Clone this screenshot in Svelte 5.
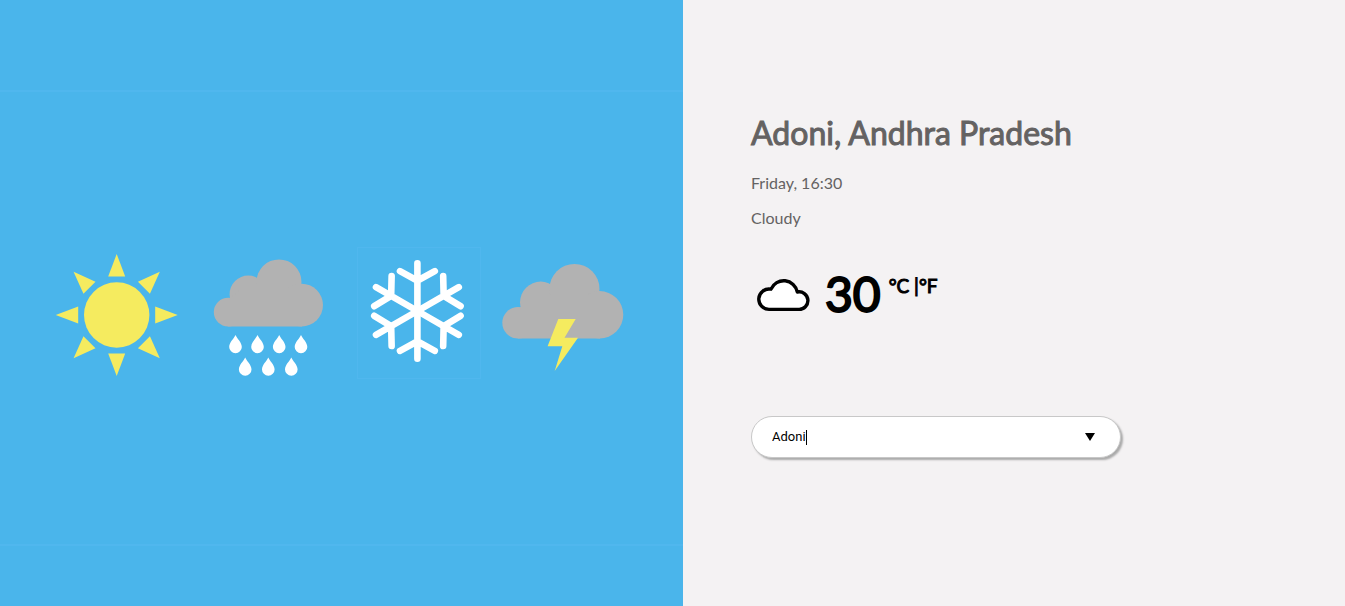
<script>
  const rays = [0, 45, 90, 135, 180, 225, 270, 315];
  const arms = [0, 60, 120, 180, 240, 300];
  const drops = [
    [235.5, 335], [257.5, 335], [279.2, 335], [301, 335],
    [245.2, 357.5], [268.3, 357.5], [291.3, 357.5]
  ];

  let city = $state('Adoni');
</script>

<main class="page">
  <section class="artwork">
    <svg viewBox="0 90 683 456" role="img" aria-label="Sun, rain, snow and thunderstorm">
      <rect class="edge" x="0" y="90" width="683" height="2" />
      <rect class="edge" x="0" y="544" width="683" height="2" />

      <g class="yellow" transform="translate(116.7 315)">
        <circle r="32.7" />
        {#each rays as angle}
          <path d="M0-61L8.5-38.5H-8.5Z" transform="rotate({angle})" />
        {/each}
      </g>

      <g class="grey">
        <circle cx="228.2" cy="312.1" r="14.4" />
        <circle cx="248.3" cy="294.2" r="18.7" />
        <circle cx="279" cy="281.9" r="22.5" />
        <circle cx="301.6" cy="305.1" r="21.4" />
        <path d="M228 326.5V300L240 290H302V326.5Z" />
      </g>
      {#each drops as [x, y]}
        <path
          class="white"
          d="M0 0C1.5 3.5 6.3 7.5 6.3 11.9A6.3 6.3 0 0 1-6.3 11.9C-6.3 7.5-1.5 3.5 0 0Z"
          transform="translate({x} {y})"
        />
      {/each}

      <rect class="frame" x="357.5" y="247.5" width="123" height="131" />
      <g class="flake" transform="translate(417.4 311)">
        {#each arms as angle}
          <path d="M0 0V-47.8M-17.4-39.8L0-30.3L17.4-39.8" transform="rotate({angle})" />
        {/each}
      </g>

      <g class="grey">
        <circle cx="518" cy="322.8" r="15.7" />
        <circle cx="540.7" cy="302.3" r="20.7" />
        <circle cx="574.5" cy="288.9" r="25" />
        <circle cx="599.6" cy="314.8" r="23.7" />
        <path d="M518 338.5V309L534 297H600V338.5Z" />
      </g>
      <path
        class="yellow"
        d="M558.3 319H575.7L564.5 337.8H578L554.7 371L562.3 346.3H547.6Z"
      />
    </svg>
  </section>

  <section class="weather">
    <h1>Adoni, Andhra Pradesh</h1>
    <p>Friday, 16:30</p>
    <p>Cloudy</p>

    <div class="reading">
      <svg class="cloud" viewBox="0 0 52 35" aria-hidden="true">
        <path
          d="M12.2 32.4A10.2 10.2 0 1 1 14 12.2A13.8 13.8 0 0 1 40.3 15A8.8 8.8 0 1 1 41.6 32.4Z"
        />
      </svg>
      <span class="degrees">30</span>
      <span class="units">°C |°F</span>
    </div>

    <label class="picker">
      <input type="text" aria-label="City" bind:value={city} />
      <span class="caret"></span>
      <svg class="arrow" viewBox="0 0 10 8" aria-hidden="true"><path d="M0 0H10L5 8Z" /></svg>
    </label>
  </section>
</main>

<style>
  :global(body) {
    margin: 0;
    background: #f4f2f3;
  }

  .page {
    display: grid;
    grid-template-columns: 683fr 662fr;
    min-height: 100vh;
    font-family: Lato, sans-serif;
    background: #f4f2f3;
  }

  .artwork {
    box-sizing: border-box;
    padding-top: 90px;
    background: #4ab5eb;
  }

  .artwork svg {
    display: block;
    width: 100%;
  }

  .edge {
    fill: #50b7ee;
  }

  .frame {
    fill: none;
    stroke: #50b7ee;
  }

  .yellow {
    fill: #f5eb5f;
  }

  .grey {
    fill: #b2b2b2;
  }

  .white {
    fill: #fff;
  }

  .flake {
    fill: none;
    stroke: #fff;
    stroke-width: 6.6;
    stroke-linecap: round;
  }

  .weather {
    padding: 112px 68px 0;
    color: #646262;
  }

  h1 {
    margin: 0 0 19px;
    font-size: 32px;
    line-height: 42px;
    font-weight: 400;
    -webkit-text-stroke: 1px currentColor;
  }

  p {
    margin: 0 0 15px;
    font-size: 16px;
    line-height: 20px;
  }

  .reading {
    display: flex;
    align-items: flex-start;
    margin-top: 36px;
    padding: 0 6px;
    color: #000;
    font-weight: 400;
  }

  .cloud {
    width: 52px;
    height: 35px;
    margin: 13px 16px 0 0;
    overflow: visible;
    fill: #fff;
    stroke: #000;
    stroke-width: 3.4;
    stroke-linejoin: round;
  }

  .degrees {
    font-size: 48px;
    line-height: 60px;
    -webkit-text-stroke: 2px currentColor;
  }

  .units {
    margin: 10px 0 0 8px;
    font-size: 19px;
    line-height: 24px;
    -webkit-text-stroke: 1px currentColor;
  }

  .picker {
    display: flex;
    align-items: center;
    box-sizing: border-box;
    max-width: 370px;
    height: 42px;
    margin-top: 92px;
    padding: 0 25px 0 20px;
    border: 1px solid #c8c8c8;
    border-radius: 21px;
    background: #fff;
    box-shadow: 2px 2px 2px #aaa;
  }

  input {
    field-sizing: content;
    padding: 0;
    border: 0;
    outline: 0;
    background: none;
    color: #000;
    font: 13px/20px Roboto, sans-serif;
    caret-color: transparent;
  }

  .caret {
    width: 1px;
    height: 15px;
    background: #000;
  }

  .arrow {
    width: 10px;
    height: 8px;
    margin-left: auto;
  }
</style>
